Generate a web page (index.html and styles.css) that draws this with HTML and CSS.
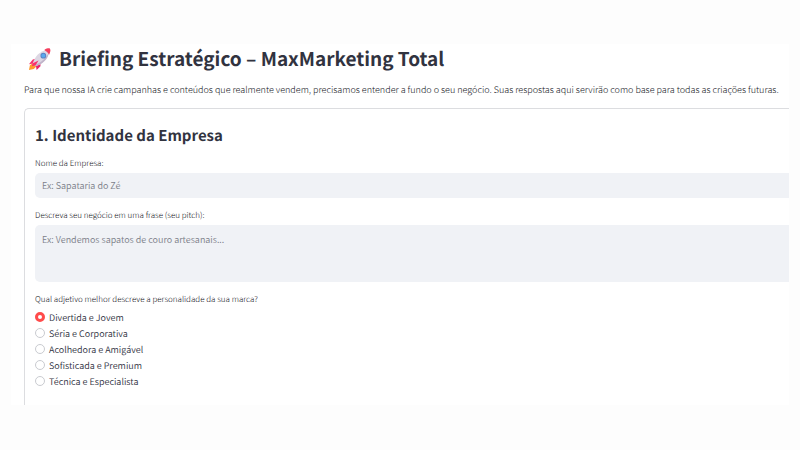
FILE: index.html
```html
<!DOCTYPE html>
<html lang="pt-BR">
<head>
    <meta charset="UTF-8">
    <meta name="viewport" content="width=device-width, initial-scale=1.0">
    <title>Briefing Estratégico – MaxMarketing Total</title>

    <link rel="stylesheet" href="styles.css">
</head>
<body>
    <main class="container">
        <h1 class="title">
            <svg class="rocket" viewBox="0 0 24 24" aria-hidden="true">
                <path d="M5 16 L2 18 L1 23 L6 22 L9 19 Z" fill="#ff9a2e"/>
                <path d="M9 11 L5 12 L1 17 L7 16 Z" fill="#f8306d"/>
                <path d="M13 16 L13 19 L9 23 L8 17 Z" fill="#e9206a"/>
                <path d="M5 16 C7 9 12 3 20 2 C22 2 22 3 22 4 C21 12 15 17 8 19 Z" fill="#ddd7e3"/>
                <path d="M7 18 C14 15 20 10 22 4 C21 12 15 17 8 19 Z" fill="#c0b4c9"/>
                <path d="M17 2 C20 0 23 0 23 1 C24 2 23 5 22 7 C21 5 19 3 17 2 Z" fill="#f43f5e"/>
                <path d="M11 13 L5 16 L4 19 L8 18 Z" fill="#f8306d"/>
                <circle cx="16" cy="8" r="3" fill="#5a83c4"/>
                <circle cx="16" cy="8" r="2" fill="#58a9ee"/>
            </svg>
            Briefing Estratégico – MaxMarketing Total
        </h1>
        <p class="intro">Para que nossa IA crie campanhas e conteúdos que realmente vendem, precisamos entender a fundo o seu negócio. Suas respostas aqui servirão como base para todas as criações futuras.</p>

        <form class="card">
            <h2 class="subtitle">1. Identidade da Empresa</h2>

            <label class="label" for="nome">Nome da Empresa:</label>
            <input class="field" type="text" id="nome" name="nome" placeholder="Ex: Sapataria do Zé">

            <label class="label" for="pitch">Descreva seu negócio em uma frase (seu pitch):</label>
            <textarea class="field field-area" id="pitch" name="pitch" placeholder="Ex: Vendemos sapatos de couro artesanais..."></textarea>

            <fieldset class="options">
                <legend class="label">Qual adjetivo melhor descreve a personalidade da sua marca?</legend>
                <label class="option"><input type="radio" name="marca" value="divertida" checked>Divertida e Jovem</label>
                <label class="option"><input type="radio" name="marca" value="seria">Séria e Corporativa</label>
                <label class="option"><input type="radio" name="marca" value="acolhedora">Acolhedora e Amigável</label>
                <label class="option"><input type="radio" name="marca" value="sofisticada">Sofisticada e Premium</label>
                <label class="option"><input type="radio" name="marca" value="tecnica">Técnica e Especialista</label>
            </fieldset>
        </form>
    </main>
</body>
</html>
```
FILE: styles.css
```css
* {
    box-sizing: border-box;
}

body {
    margin: 0;
    padding: 44px 11px;
    background-color: #fdfdfd;
    color: #31333f;
    font-family: "Noto Sans CJK SC", "Noto Sans", sans-serif;
    font-size: 9px;
    font-weight: 350;
    text-rendering: geometricPrecision;
}

.container {
    padding-left: 13px;
    background-color: #fff;
}

.title {
    display: flex;
    align-items: center;
    gap: 8px;
    margin: 0;
    padding-left: 4px;
    font-size: 19px;
    font-weight: 700;
    line-height: 30px;
}

.rocket {
    width: 23px;
    height: 23px;
}

.intro {
    margin: 8px 0 10px;
    color: #12131a;
    font-weight: 300;
    line-height: 16px;
    white-space: nowrap;
}

.card {
    padding: 17px 0 16px 10px;
    border: 1px solid #dcdde0;
    border-width: 1px 0 0 1px;
    border-top-left-radius: 5px;
}

.subtitle {
    margin: 0 0 12px;
    font-size: 15px;
    font-weight: 700;
    line-height: 20px;
}

.label {
    display: block;
    margin-bottom: 3px;
    padding: 0;
    color: #12131a;
    font-size: 8px;
    font-weight: 300;
    line-height: 12px;
}

.field {
    display: block;
    width: 100%;
    height: 25px;
    margin-bottom: 12px;
    padding: 0 7px;
    border: 0;
    border-radius: 5px 0 0 5px;
    background-color: #f0f2f6;
    color: #31333f;
    font: inherit;
    resize: none;
}

.field::placeholder {
    color: #7c7f89;
    opacity: 1;
}

.field-area {
    height: 57px;
    padding: 8px 7px;
    line-height: 14px;
}

.options {
    margin: 0;
    padding: 0;
    border: 0;
}

.option {
    display: flex;
    align-items: center;
    gap: 4px;
    height: 16px;
}

.option input {
    appearance: none;
    width: 10px;
    height: 10px;
    margin: 0;
    border: 1px solid #c9cbd0;
    border-radius: 50%;
    background-color: #fff;
}

.option input:checked {
    border: 3px solid #ff4b4b;
}
```
